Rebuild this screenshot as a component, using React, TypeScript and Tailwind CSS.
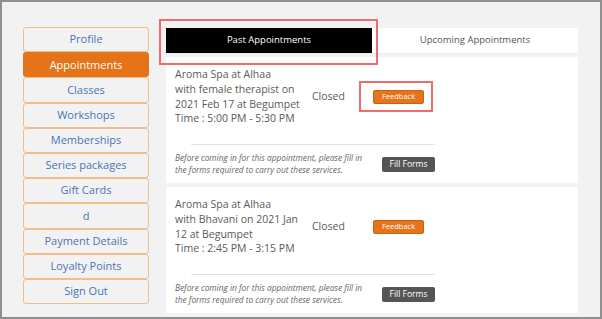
import React from 'react';

const menuItems = [
  'Profile',
  'Appointments',
  'Classes',
  'Workshops',
  'Memberships',
  'Series packages',
  'Gift Cards',
  'd',
  'Payment Details',
  'Loyalty Points',
  'Sign Out',
];

const appointments = [
  {
    id: 1,
    lines: ['Aroma Spa at Alhaa', 'with female therapist on', '2021 Feb 17 at Begumpet', 'Time : 5:00 PM - 5:30 PM'],
    status: 'Closed',
    highlight: true,
  },
  {
    id: 2,
    lines: ['Aroma Spa at Alhaa', 'with Bhavani on 2021 Jan', '12 at Begumpet', 'Time : 2:45 PM - 3:15 PM'],
    status: 'Closed',
    highlight: false,
  },
];

function AppointmentCard({ lines, status, highlight }: { lines: string[]; status: string; highlight: boolean }) {
  return (
    <div className="bg-white h-[126px] pl-[9px] flex flex-col">
      {/* details row */}
      <div className="flex items-center pt-[11px] h-[87px] pb-[19px]">
        <div className="w-[137px] text-[10.5px] leading-[14.7px] text-[#5a5a5a]">
          {lines.map(line => (
            <div key={line} className="whitespace-nowrap">{line}</div>
          ))}
        </div>
        <div className="w-[61px] text-[10.5px] text-[#5a5a5a]">{status}</div>
        <div className="relative flex">
          <button className="w-[51px] h-[14px] bg-[#e5741a] border border-[#c9620f] rounded-[2px] text-white text-[7.5px] leading-none">
            Feedback
          </button>
          {highlight && (
            <div className="absolute left-[-14px] top-[-9px] w-[74px] h-[31px] border-2 border-[#f06b6b]" />
          )}
        </div>
      </div>
      <div className="ml-[16px] w-[244px] h-px bg-[#e3e3e3]" />
      {/* forms row */}
      <div className="flex items-center pt-[7px]">
        <div className="w-[207px] text-[8.3px] leading-[12px] italic text-[#666]">
          <div className="whitespace-nowrap">Before coming in for this appointment, please fill in</div>
          <div className="whitespace-nowrap">the forms required to carry out these services.</div>
        </div>
        <button className="w-[53px] h-[15px] bg-[#555] rounded-[2px] text-white text-[8.5px] leading-none">
          Fill Forms
        </button>
      </div>
    </div>
  );
}

export default function App() {
  return (
    <div
      className="w-[602px] h-[319px] bg-[#f2f2f2] border-2 border-[#8f8f8f] flex"
      style={{ fontFamily: '"Open Sans", sans-serif' }}
    >
      {/* Sidebar */}
      <nav className="ml-[21px] mt-[25px] w-[126px] flex flex-col">
        {menuItems.map(item =>
          item === 'Appointments' ? (
            <div
              key={item}
              className="h-[25.2px] flex items-center justify-center rounded-[3px] bg-[#e5731a] text-white text-[11px]"
            >
              {item}
            </div>
          ) : (
            <div
              key={item}
              className="h-[25.2px] flex items-center justify-center rounded-[3px] border border-[#f1bd8c] text-[#4b73b8] text-[11px]"
            >
              {item}
            </div>
          )
        )}
      </nav>

      {/* Main */}
      <main className="ml-[17px] mt-[26px] w-[412px] flex flex-col">
        <div className="relative h-[26px] bg-white border-b border-[#ececec] flex">
          <div className="w-[206px] bg-black text-white text-[9.5px] flex items-center justify-center">
            Past Appointments
          </div>
          <div className="flex-1 text-[#555] text-[9.5px] flex items-center justify-center">
            Upcoming Appointments
          </div>
          <div className="absolute left-[-7px] top-[-9px] w-[219px] h-[46px] border-2 border-[#f06b6b]" />
        </div>
        <div className="mt-[3px] flex flex-col gap-[4px]">
          {appointments.map(appt => (
            <AppointmentCard key={appt.id} lines={appt.lines} status={appt.status} highlight={appt.highlight} />
          ))}
        </div>
      </main>
    </div>
  );
}
